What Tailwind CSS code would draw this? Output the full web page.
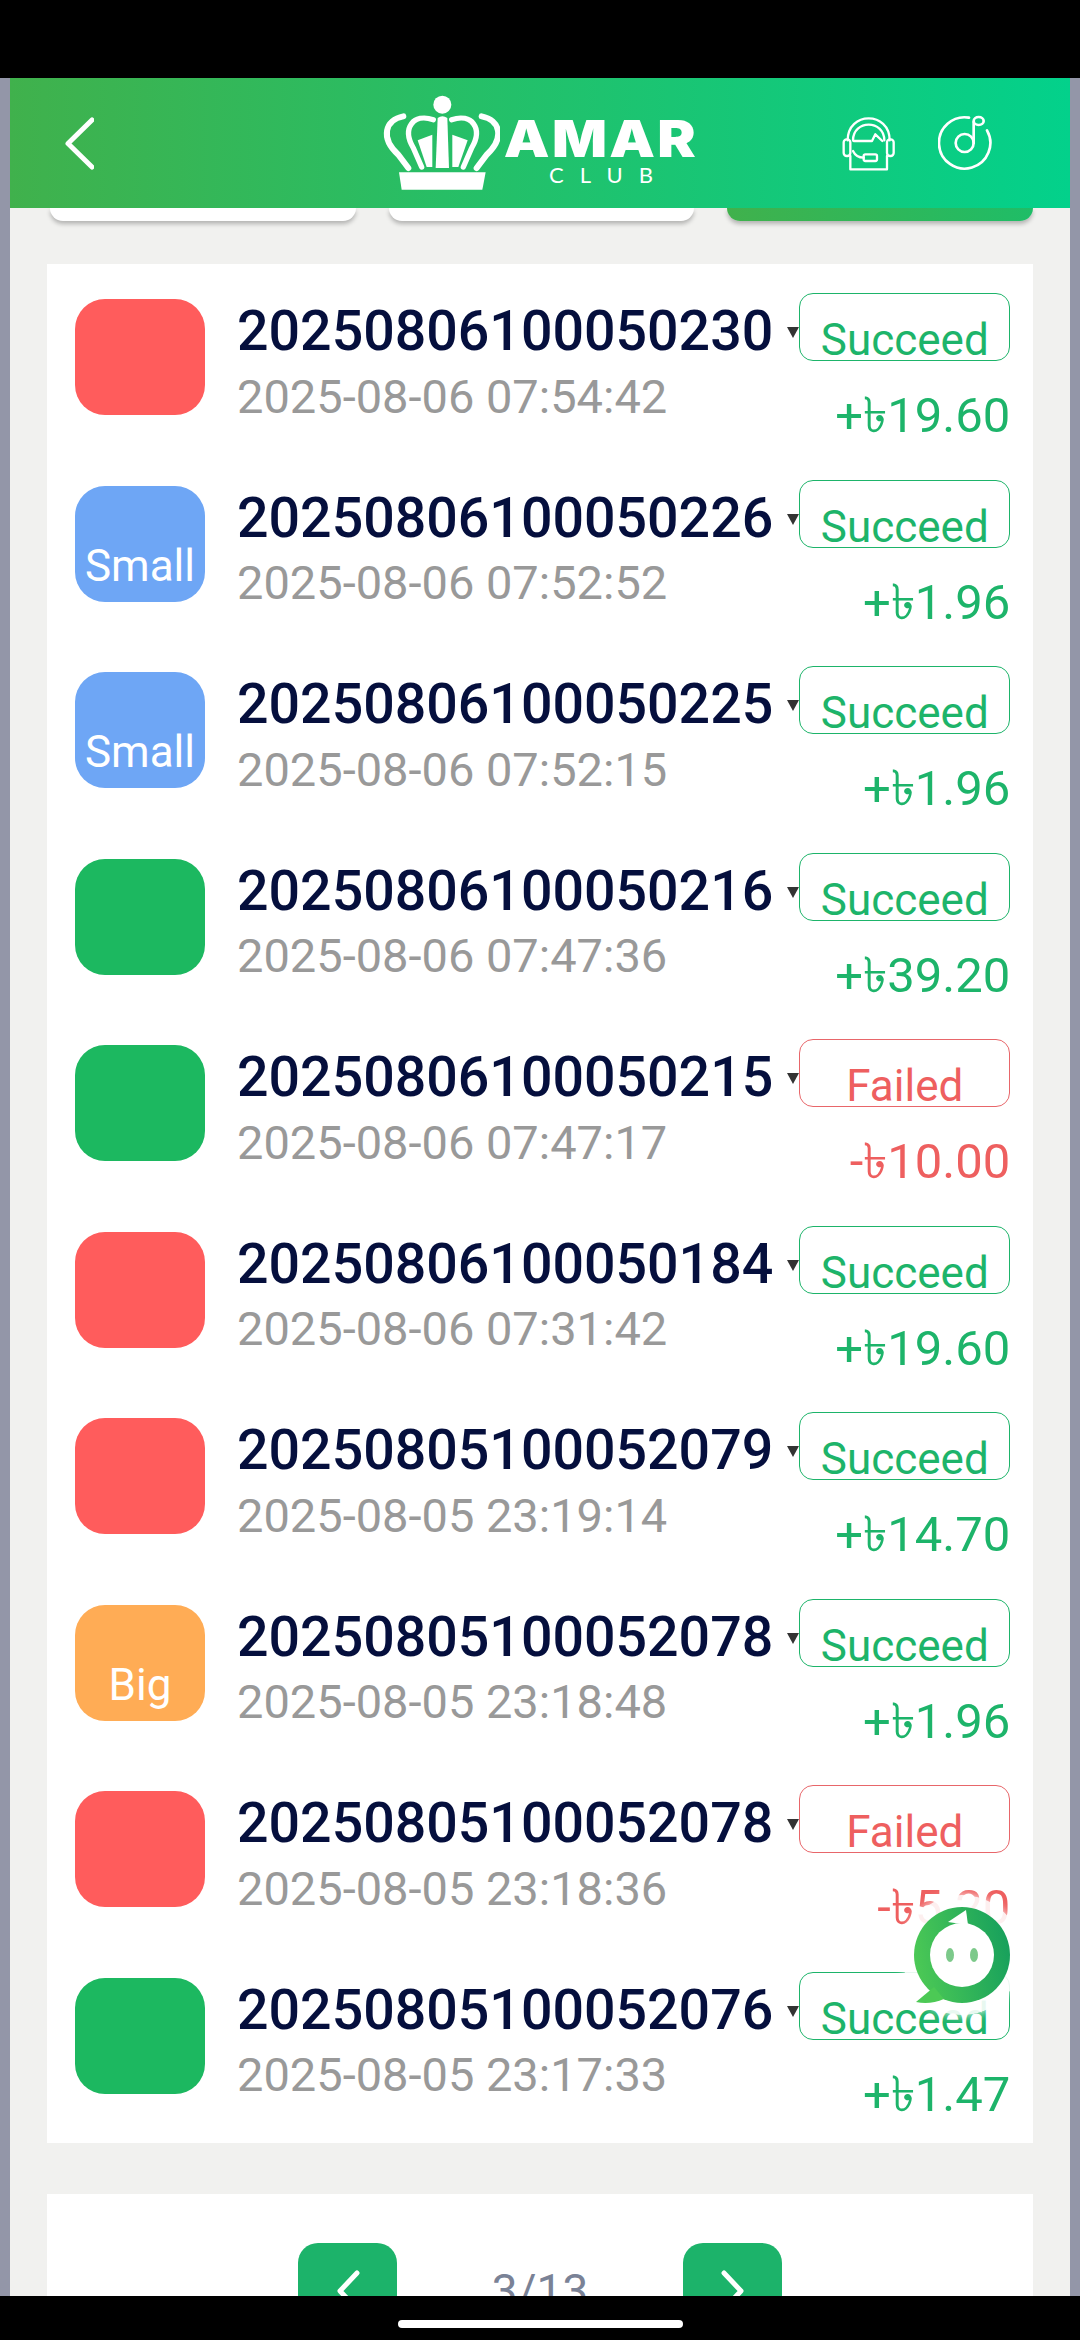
<!DOCTYPE html>
<html lang="en">
<head>
    <meta charset="UTF-8">
    <meta name="viewport" content="width=device-width, initial-scale=1.0">
    <title>Bet History | Amar Club</title>
    <script src="https://cdn.jsdelivr.net/npm/@tailwindcss/browser@4"></script>
</head>
<body class="bg-black">
<div class="relative w-[1080px] h-[2340px] flex flex-col overflow-hidden bg-black font-['Roboto','Noto_Sans','DejaVu_Sans',sans-serif]">

    <!-- status bar -->
    <div class="h-[78px] shrink-0 bg-black"></div>

    <div class="h-[2218px] shrink-0 px-[10px] bg-[#9396a8]">
        <div class="h-full overflow-hidden bg-[#f1f1ef]">

            <!-- header -->
            <header class="relative z-10 h-[130px] flex items-center pl-[55px] bg-linear-to-r/srgb from-[#40b14c] to-[#03d18b]">
                <svg class="w-[29px] h-[53px]" viewBox="0 0 29 53" fill="none" stroke="white" stroke-width="5" stroke-linecap="round" stroke-linejoin="round"><path d="M27 3 L3 26.5 L27 50"/></svg>

                <!-- logo -->
                <svg class="w-[120px] h-[100px] ml-[286px]" viewBox="55 70 360 300" fill="none" stroke="white" stroke-linecap="round">
                    <circle cx="242" cy="105" r="27" fill="white" stroke="none"/>
                    <path d="M228 145 Q242 135 257 145 L262 295 L222 295 Z" fill="white" stroke="none"/>
                    <path d="M112 308 H372 L362 360 H120 Z" fill="white" stroke="none"/>
                    <path d="M125 140 C70 150 55 205 110 255 L140 295" stroke-width="18"/>
                    <path d="M215 150 C155 130 120 175 155 235 L180 292" stroke-width="16"/>
                    <path d="M360 140 C415 150 430 205 375 255 L345 295" stroke-width="18"/>
                    <path d="M270 150 C330 130 365 175 330 235 L305 292" stroke-width="16"/>
                    <path d="M168 212 L212 195 V292 H195 Z" fill="white" stroke="none"/>
                    <path d="M318 212 L272 195 V292 H290 Z" fill="white" stroke="none"/>
                </svg>
                <div class="w-[192px] ml-[5px] mt-[17px] flex flex-col items-center text-white">
                    <span class="inline-block scale-x-[1.13] text-[51px] leading-[42px] font-black tracking-[2px] font-['Inter',sans-serif]">AMAR</span>
                    <span class="text-[22px] leading-[22px] mt-[4px] pl-[16px] tracking-[16px] font-['Lato',sans-serif]">CLUB</span>
                </div>

                <!-- headset -->
                <svg class="w-[53px] h-[55px] ml-[145px]" viewBox="65 75 159 165" fill="none" stroke="white" stroke-width="7" stroke-linecap="round" stroke-linejoin="round">
                    <path d="M82 148 C82 60 208 60 208 148"/>
                    <path d="M98 148 C98 85 192 85 192 148"/>
                    <rect x="70" y="145" width="20" height="50" rx="9"/>
                    <rect x="200" y="145" width="20" height="50" rx="9"/>
                    <path d="M100 150 H155 L165 130 L186 150"/>
                    <path d="M90 195 V235 H200 V195"/>
                    <path d="M98 180 C105 195 115 200 130 200"/>
                    <rect x="130" y="190" width="40" height="20" rx="5"/>
                </svg>

                <!-- music -->
                <svg class="w-[56px] h-[56px] ml-[43px]" viewBox="355 76 168 168" fill="none" stroke="white" stroke-width="8" stroke-linecap="round">
                    <path d="M448 84 A77 77 0 1 0 502 122"/>
                    <circle cx="435" cy="160" r="27"/>
                    <path d="M462 160 V97"/>
                    <ellipse cx="477" cy="94" rx="15" ry="12"/>
                </svg>
            </header>

            <!-- tabs, scrolled almost out of view -->
            <div class="grid grid-cols-3 gap-[33px] pl-[40px] pr-[37px]">
                <div class="h-[13px] rounded-b-[20px] bg-white shadow-[0_3px_4px_rgba(0,0,0,0.25)]"></div>
                <div class="h-[13px] rounded-b-[20px] bg-white shadow-[0_3px_4px_rgba(0,0,0,0.25)]"></div>
                <div class="h-[13px] rounded-b-[20px] bg-linear-to-r/srgb from-[#40b14c] to-[#1fbd67] shadow-[0_3px_4px_rgba(0,0,0,0.25)]"></div>
            </div>

            <!-- records -->
            <div class="mx-[37px] mt-[43px] h-[1879px] pt-[6px] pl-[28px] pr-[23px] bg-white">

                <div class="flex items-start h-[186.5px] pt-[23px]">
                    <div class="w-[130px] h-[116px] mt-[6px] shrink-0 flex items-end justify-center rounded-[30px] bg-[#ff5c5c] text-white text-[44px] leading-none pb-[14px]"></div>
                    <div class="ml-[32px] flex-1">
                        <div class="mt-[11px] flex items-center text-[55.5px] leading-none font-medium text-[#050f3d]">20250806100050230<span class="ml-[14px] mt-[2px] w-0 h-0 border-x-[6px] border-x-transparent border-t-[11px] border-t-[#333]"></span></div>
                        <div class="mt-[13px] text-[47px] leading-none text-[#999]">2025-08-06 07:54:42</div>
                    </div>
                    <div class="w-[211px] shrink-0 flex flex-col items-end">
                        <div class="w-full h-[68px] flex items-end justify-center rounded-[14px] border border-[#1db46a] text-[44px] leading-[40px] text-[#1db46a]">Succeed</div>
                        <div class="mt-[30px] text-[49px] leading-none text-[#1db46a]">+৳19.60</div>
                    </div>
                </div>

                <div class="flex items-start h-[186.5px] pt-[23px]">
                    <div class="w-[130px] h-[116px] mt-[6px] shrink-0 flex items-end justify-center rounded-[30px] bg-[#6ea6f5] text-white text-[44px] leading-none pb-[14px]">Small</div>
                    <div class="ml-[32px] flex-1">
                        <div class="mt-[11px] flex items-center text-[55.5px] leading-none font-medium text-[#050f3d]">20250806100050226<span class="ml-[14px] mt-[2px] w-0 h-0 border-x-[6px] border-x-transparent border-t-[11px] border-t-[#333]"></span></div>
                        <div class="mt-[13px] text-[47px] leading-none text-[#999]">2025-08-06 07:52:52</div>
                    </div>
                    <div class="w-[211px] shrink-0 flex flex-col items-end">
                        <div class="w-full h-[68px] flex items-end justify-center rounded-[14px] border border-[#1db46a] text-[44px] leading-[40px] text-[#1db46a]">Succeed</div>
                        <div class="mt-[30px] text-[49px] leading-none text-[#1db46a]">+৳1.96</div>
                    </div>
                </div>

                <div class="flex items-start h-[186.5px] pt-[23px]">
                    <div class="w-[130px] h-[116px] mt-[6px] shrink-0 flex items-end justify-center rounded-[30px] bg-[#6ea6f5] text-white text-[44px] leading-none pb-[14px]">Small</div>
                    <div class="ml-[32px] flex-1">
                        <div class="mt-[11px] flex items-center text-[55.5px] leading-none font-medium text-[#050f3d]">20250806100050225<span class="ml-[14px] mt-[2px] w-0 h-0 border-x-[6px] border-x-transparent border-t-[11px] border-t-[#333]"></span></div>
                        <div class="mt-[13px] text-[47px] leading-none text-[#999]">2025-08-06 07:52:15</div>
                    </div>
                    <div class="w-[211px] shrink-0 flex flex-col items-end">
                        <div class="w-full h-[68px] flex items-end justify-center rounded-[14px] border border-[#1db46a] text-[44px] leading-[40px] text-[#1db46a]">Succeed</div>
                        <div class="mt-[30px] text-[49px] leading-none text-[#1db46a]">+৳1.96</div>
                    </div>
                </div>

                <div class="flex items-start h-[186.5px] pt-[23px]">
                    <div class="w-[130px] h-[116px] mt-[6px] shrink-0 flex items-end justify-center rounded-[30px] bg-[#1cb860] text-white text-[44px] leading-none pb-[14px]"></div>
                    <div class="ml-[32px] flex-1">
                        <div class="mt-[11px] flex items-center text-[55.5px] leading-none font-medium text-[#050f3d]">20250806100050216<span class="ml-[14px] mt-[2px] w-0 h-0 border-x-[6px] border-x-transparent border-t-[11px] border-t-[#333]"></span></div>
                        <div class="mt-[13px] text-[47px] leading-none text-[#999]">2025-08-06 07:47:36</div>
                    </div>
                    <div class="w-[211px] shrink-0 flex flex-col items-end">
                        <div class="w-full h-[68px] flex items-end justify-center rounded-[14px] border border-[#1db46a] text-[44px] leading-[40px] text-[#1db46a]">Succeed</div>
                        <div class="mt-[30px] text-[49px] leading-none text-[#1db46a]">+৳39.20</div>
                    </div>
                </div>

                <div class="flex items-start h-[186.5px] pt-[23px]">
                    <div class="w-[130px] h-[116px] mt-[6px] shrink-0 flex items-end justify-center rounded-[30px] bg-[#1cb860] text-white text-[44px] leading-none pb-[14px]"></div>
                    <div class="ml-[32px] flex-1">
                        <div class="mt-[11px] flex items-center text-[55.5px] leading-none font-medium text-[#050f3d]">20250806100050215<span class="ml-[14px] mt-[2px] w-0 h-0 border-x-[6px] border-x-transparent border-t-[11px] border-t-[#333]"></span></div>
                        <div class="mt-[13px] text-[47px] leading-none text-[#999]">2025-08-06 07:47:17</div>
                    </div>
                    <div class="w-[211px] shrink-0 flex flex-col items-end">
                        <div class="w-full h-[68px] flex items-end justify-center rounded-[14px] border border-[#e8666a] text-[44px] leading-[40px] text-[#ee5f5f]">Failed</div>
                        <div class="mt-[30px] text-[49px] leading-none text-[#ee5f5f]">-৳10.00</div>
                    </div>
                </div>

                <div class="flex items-start h-[186.5px] pt-[23px]">
                    <div class="w-[130px] h-[116px] mt-[6px] shrink-0 flex items-end justify-center rounded-[30px] bg-[#ff5c5c] text-white text-[44px] leading-none pb-[14px]"></div>
                    <div class="ml-[32px] flex-1">
                        <div class="mt-[11px] flex items-center text-[55.5px] leading-none font-medium text-[#050f3d]">20250806100050184<span class="ml-[14px] mt-[2px] w-0 h-0 border-x-[6px] border-x-transparent border-t-[11px] border-t-[#333]"></span></div>
                        <div class="mt-[13px] text-[47px] leading-none text-[#999]">2025-08-06 07:31:42</div>
                    </div>
                    <div class="w-[211px] shrink-0 flex flex-col items-end">
                        <div class="w-full h-[68px] flex items-end justify-center rounded-[14px] border border-[#1db46a] text-[44px] leading-[40px] text-[#1db46a]">Succeed</div>
                        <div class="mt-[30px] text-[49px] leading-none text-[#1db46a]">+৳19.60</div>
                    </div>
                </div>

                <div class="flex items-start h-[186.5px] pt-[23px]">
                    <div class="w-[130px] h-[116px] mt-[6px] shrink-0 flex items-end justify-center rounded-[30px] bg-[#ff5c5c] text-white text-[44px] leading-none pb-[14px]"></div>
                    <div class="ml-[32px] flex-1">
                        <div class="mt-[11px] flex items-center text-[55.5px] leading-none font-medium text-[#050f3d]">20250805100052079<span class="ml-[14px] mt-[2px] w-0 h-0 border-x-[6px] border-x-transparent border-t-[11px] border-t-[#333]"></span></div>
                        <div class="mt-[13px] text-[47px] leading-none text-[#999]">2025-08-05 23:19:14</div>
                    </div>
                    <div class="w-[211px] shrink-0 flex flex-col items-end">
                        <div class="w-full h-[68px] flex items-end justify-center rounded-[14px] border border-[#1db46a] text-[44px] leading-[40px] text-[#1db46a]">Succeed</div>
                        <div class="mt-[30px] text-[49px] leading-none text-[#1db46a]">+৳14.70</div>
                    </div>
                </div>

                <div class="flex items-start h-[186.5px] pt-[23px]">
                    <div class="w-[130px] h-[116px] mt-[6px] shrink-0 flex items-end justify-center rounded-[30px] bg-[#ffac55] text-white text-[44px] leading-none pb-[14px]">Big</div>
                    <div class="ml-[32px] flex-1">
                        <div class="mt-[11px] flex items-center text-[55.5px] leading-none font-medium text-[#050f3d]">20250805100052078<span class="ml-[14px] mt-[2px] w-0 h-0 border-x-[6px] border-x-transparent border-t-[11px] border-t-[#333]"></span></div>
                        <div class="mt-[13px] text-[47px] leading-none text-[#999]">2025-08-05 23:18:48</div>
                    </div>
                    <div class="w-[211px] shrink-0 flex flex-col items-end">
                        <div class="w-full h-[68px] flex items-end justify-center rounded-[14px] border border-[#1db46a] text-[44px] leading-[40px] text-[#1db46a]">Succeed</div>
                        <div class="mt-[30px] text-[49px] leading-none text-[#1db46a]">+৳1.96</div>
                    </div>
                </div>

                <div class="flex items-start h-[186.5px] pt-[23px]">
                    <div class="w-[130px] h-[116px] mt-[6px] shrink-0 flex items-end justify-center rounded-[30px] bg-[#ff5c5c] text-white text-[44px] leading-none pb-[14px]"></div>
                    <div class="ml-[32px] flex-1">
                        <div class="mt-[11px] flex items-center text-[55.5px] leading-none font-medium text-[#050f3d]">20250805100052078<span class="ml-[14px] mt-[2px] w-0 h-0 border-x-[6px] border-x-transparent border-t-[11px] border-t-[#333]"></span></div>
                        <div class="mt-[13px] text-[47px] leading-none text-[#999]">2025-08-05 23:18:36</div>
                    </div>
                    <div class="w-[211px] shrink-0 flex flex-col items-end">
                        <div class="w-full h-[68px] flex items-end justify-center rounded-[14px] border border-[#e8666a] text-[44px] leading-[40px] text-[#ee5f5f]">Failed</div>
                        <div class="mt-[30px] text-[49px] leading-none text-[#ee5f5f]">-৳5.20</div>
                    </div>
                </div>

                <div class="flex items-start h-[186.5px] pt-[23px]">
                    <div class="w-[130px] h-[116px] mt-[6px] shrink-0 flex items-end justify-center rounded-[30px] bg-[#1cb860] text-white text-[44px] leading-none pb-[14px]"></div>
                    <div class="ml-[32px] flex-1">
                        <div class="mt-[11px] flex items-center text-[55.5px] leading-none font-medium text-[#050f3d]">20250805100052076<span class="ml-[14px] mt-[2px] w-0 h-0 border-x-[6px] border-x-transparent border-t-[11px] border-t-[#333]"></span></div>
                        <div class="mt-[13px] text-[47px] leading-none text-[#999]">2025-08-05 23:17:33</div>
                    </div>
                    <div class="w-[211px] shrink-0 flex flex-col items-end">
                        <div class="w-full h-[68px] flex items-end justify-center rounded-[14px] border border-[#1db46a] text-[44px] leading-[40px] text-[#1db46a]">Succeed</div>
                        <div class="mt-[30px] text-[49px] leading-none text-[#1db46a]">+৳1.47</div>
                    </div>
                </div>
            </div>

            <!-- pagination -->
            <div class="mx-[37px] mt-[51px] h-[200px] pt-[49px] flex justify-center bg-white">
                <div class="w-[99px] h-[96px] flex items-center justify-center rounded-[20px] bg-[#1cb36a]">
                    <svg class="w-[24px] h-[42px]" viewBox="0 0 24 42" fill="none" stroke="white" stroke-width="5" stroke-linecap="round" stroke-linejoin="round"><path d="M21 3 L4 21 L21 39"/></svg>
                </div>
                <div class="w-[286px] h-[96px] flex items-center justify-center text-[46px] text-[#7a8296]">3/13</div>
                <div class="w-[99px] h-[96px] flex items-center justify-center rounded-[20px] bg-[#1cb36a]">
                    <svg class="w-[24px] h-[42px]" viewBox="0 0 24 42" fill="none" stroke="white" stroke-width="5" stroke-linecap="round" stroke-linejoin="round"><path d="M3 3 L20 21 L3 39"/></svg>
                </div>
            </div>
        </div>
    </div>

    <!-- nav bar -->
    <div class="flex-1 flex justify-center pt-[24px] bg-black">
        <div class="w-[285px] h-[8px] rounded-full bg-white"></div>
    </div>

    <!-- floating chat button -->
    <div class="absolute left-[902px] top-[1895px] w-[120px] h-[120px] rounded-full bg-white/90 shadow-[0_0_10px_rgba(255,255,255,0.9)]">
        <svg class="w-[120px] h-[120px]" viewBox="0 0 120 120">
            <defs>
                <linearGradient id="chatGreen" x1="0" y1="0.6" x2="1" y2="0.4">
                    <stop offset="0" stop-color="#4cc955"/>
                    <stop offset="1" stop-color="#17a05c"/>
                </linearGradient>
            </defs>
            <circle cx="60" cy="60" r="48" fill="url(#chatGreen)"/>
            <path d="M14 107 L32 92 L42 104 Q28 110 14 107 Z" fill="#4cc955"/>
            <circle cx="60" cy="60" r="32" fill="white"/>
            <path d="M46 27 L64 15 L66 30 Z" fill="white"/>
            <ellipse cx="48" cy="60" rx="4" ry="7" fill="#7cc98a"/>
            <ellipse cx="72" cy="60" rx="4" ry="7" fill="#7cc98a"/>
        </svg>
    </div>
</div>
</body>
</html>
